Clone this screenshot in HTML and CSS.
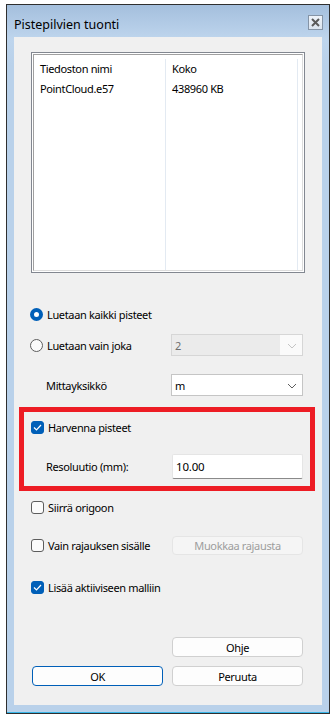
FILE: index.html
```html
<!DOCTYPE html>
<html>
<head>
    <title>Pistepilvien tuonti</title>
    <meta charset="utf-8">
    <link rel="stylesheet" href="styles.css">
</head>

<body>
    <div class="window">
        <div class="titlebar">
            <span class="title">Pistepilvien tuonti</span>
            <span class="close-btn">
                <svg width="9" height="9" viewBox="0 0 9 9">
                    <path d="M1 1 L8 8 M8 1 L1 8" stroke="#5a5a5a" stroke-width="2"/>
                </svg>
            </span>
        </div>

        <div class="client">
            <div class="filelist">
                <div class="list-inner">
                    <div class="col col-name">
                        <div class="cell">Tiedoston nimi</div>
                        <div class="cell">PointCloud.e57</div>
                    </div>
                    <div class="col col-size">
                        <div class="cell">Koko</div>
                        <div class="cell">438960 KB</div>
                    </div>
                </div>
            </div>

            <div class="row row-first">
                <span class="radio checked"></span>
                <span class="text">Luetaan kaikki pisteet</span>
            </div>

            <div class="row row-tall gap-10">
                <div class="label-col">
                    <span class="radio"></span>
                    <span class="text">Luetaan vain joka</span>
                </div>
                <div class="select disabled">
                    <span class="select-value">2</span>
                    <svg class="chevron" width="10" height="6" viewBox="0 0 10 6">
                        <path d="M1 1 L5 5 L9 1" fill="none" stroke="#c4c4c4" stroke-width="1"/>
                    </svg>
                </div>
            </div>

            <div class="row row-tall gap-18">
                <div class="label-col indent">Mittayksikkö</div>
                <div class="select">
                    <span class="select-value">m</span>
                    <svg class="chevron" width="10" height="6" viewBox="0 0 10 6">
                        <path d="M1 1 L5 5 L9 1" fill="none" stroke="#5f5f5f" stroke-width="1"/>
                    </svg>
                </div>
            </div>

            <div class="highlight">
                <div class="row">
                    <span class="checkbox checked">
                        <svg width="9" height="7" viewBox="0 0 9 7">
                            <path d="M1 3.5 L3.5 6 L8 1" fill="none" stroke="#fff" stroke-width="1.2"/>
                        </svg>
                    </span>
                    <span class="text">Harvenna pisteet</span>
                </div>
                <div class="row row-input">
                    <div class="label-col indent">Resoluutio (mm):</div>
                    <input class="textbox" type="text" value="10.00">
                </div>
            </div>

            <div class="row gap-6">
                <span class="checkbox"></span>
                <span class="text">Siirrä origoon</span>
            </div>

            <div class="row gap-18">
                <div class="label-col">
                    <span class="checkbox"></span>
                    <span class="text">Vain rajauksen sisälle</span>
                </div>
                <button class="btn btn-disabled">Muokkaa rajausta</button>
            </div>

            <div class="row gap-22">
                <span class="checkbox checked">
                    <svg width="9" height="7" viewBox="0 0 9 7">
                        <path d="M1 3.5 L3.5 6 L8 1" fill="none" stroke="#fff" stroke-width="1.2"/>
                    </svg>
                </span>
                <span class="text">Lisää aktiiviseen malliin</span>
            </div>

            <div class="row gap-40">
                <div class="label-col"></div>
                <button class="btn">Ohje</button>
            </div>

            <div class="row gap-9 buttons">
                <button class="btn btn-default">OK</button>
                <button class="btn">Peruuta</button>
            </div>
        </div>
    </div>
</body>

</html>
```

FILE: styles.css
```css
body {
    margin: 0;
    background-color: #fff;
    font-family: 'Noto Sans', 'Liberation Sans', sans-serif;
    font-size: 11px;
    letter-spacing: -0.35px;
    color: #000;
}

.window {
    box-sizing: border-box;
    width: 324px;
    height: 710px;
    margin: 4px 0 0 6px;
    padding: 0 7px 8px 7px;
    border: 1px solid #2f2f2f;
    background: linear-gradient(#a4bfdd 0, #bed5ed 34px, #b9d1ea 60px, #b9d1ea 100%);
    box-shadow: inset 0 -1px 0 #39b6e8;
}

.titlebar {
    height: 32px;
    display: flex;
    align-items: center;
    justify-content: space-between;
}

.title {
    font-size: 12.5px;
    letter-spacing: 0;
    margin-top: 6px;
}

.close-btn {
    box-sizing: border-box;
    width: 15px;
    height: 15px;
    margin-right: -1px;
    margin-top: 2px;
    border: 1px solid #8594a6;
    background: linear-gradient(#eef3f9, #dbe4ef);
    display: flex;
    align-items: center;
    justify-content: center;
}

.client {
    height: 668px;
    background-color: #f0f0f0;
    padding: 15px 0 0 17px;
    box-sizing: border-box;
}

/* file list */
.filelist {
    box-sizing: border-box;
    width: 274px;
    height: 221px;
    border: 1px solid #828790;
    padding: 1px;
    background-color: #fff;
}

.list-inner {
    box-sizing: border-box;
    height: 100%;
    display: flex;
    border-left: 1px solid #a0a0a0;
    border-top: 1px solid #a0a0a0;
    border-right: 1px solid #dcdcdc;
    border-bottom: 1px solid #dcdcdc;
    padding-top: 4px;
}

.col {
    width: 131px;
    border-right: 1px solid #e3eaf2;
}

.cell {
    height: 20px;
    line-height: 20px;
    padding-left: 6px;
    white-space: nowrap;
}

/* form rows */
.row {
    display: flex;
    align-items: center;
    height: 20px;
}

.row-first {
    margin-top: 31px;
}

.row-tall {
    height: 22px;
}

.gap-6 { margin-top: 6px; }
.gap-9 { margin-top: 9px; }
.gap-10 { margin-top: 10px; }
.gap-18 { margin-top: 18px; }
.gap-22 { margin-top: 22px; }
.gap-40 { margin-top: 40px; }

.label-col {
    width: 141px;
    flex-shrink: 0;
    display: flex;
    align-items: center;
}

.indent {
    padding-left: 15px;
    box-sizing: border-box;
}

.text {
    margin-left: 4px;
    white-space: nowrap;
}

.radio {
    box-sizing: border-box;
    width: 13px;
    height: 13px;
    margin-left: -1px;
    border-radius: 50%;
    border: 1px solid #5d5d5d;
    background-color: #fbfbfb;
    flex-shrink: 0;
}

.radio.checked {
    border: 4px solid #005fb8;
    background-color: #fff;
}

.checkbox {
    box-sizing: border-box;
    width: 13px;
    height: 13px;
    border-radius: 3px;
    border: 1px solid #5d5d5d;
    background-color: #fbfbfb;
    flex-shrink: 0;
    display: flex;
    align-items: center;
    justify-content: center;
}

.checkbox.checked {
    border-color: #005fb8;
    background-color: #005fb8;
}

/* dropdowns */
.select {
    box-sizing: border-box;
    width: 132px;
    height: 22px;
    margin-left: -1px;
    border: 1px solid #c5c5c5;
    background-color: #fff;
    display: flex;
    align-items: center;
    justify-content: space-between;
    padding: 0 5px 0 3px;
}

.select.disabled {
    border-color: #d6d6d6;
    background: linear-gradient(90deg, #ebebeb 0, #ebebeb 108px, #fafafa 108px);
    color: #6d6d6d;
}

.chevron {
    margin-top: 1px;
}

/* red frame */
.highlight {
    box-sizing: border-box;
    width: 296px;
    height: 84px;
    margin: 11px 0 0 -12px;
    border: 5px solid #ed1c24;
    padding: 5px 0 0 7px;
}

.row-input {
    height: 25px;
    margin-top: 17px;
}

.textbox {
    box-sizing: border-box;
    width: 131px;
    height: 25px;
    margin: 0;
    padding: 0 3px;
    border: 1px solid #e5e5e5;
    border-bottom-color: #8a8a8a;
    border-radius: 2px;
    background-color: #fff;
    font-family: inherit;
    font-size: 11.5px;
    letter-spacing: -0.2px;
    color: #000;
    outline: none;
}

/* buttons */
.btn {
    box-sizing: border-box;
    width: 131px;
    height: 20px;
    padding: 0;
    border: 1px solid #d0d0d0;
    border-radius: 4px;
    background-color: #fdfdfd;
    font-family: inherit;
    font-size: 11px;
    letter-spacing: -0.35px;
    color: #000;
}

.btn-disabled {
    height: 19px;
    background-color: #f5f5f5;
    border-color: #e5e5e5;
    color: #9d9d9d;
}

.btn-default {
    border-color: #005fb8;
    margin-left: 1px;
}

.buttons {
    gap: 9px;
}
```
